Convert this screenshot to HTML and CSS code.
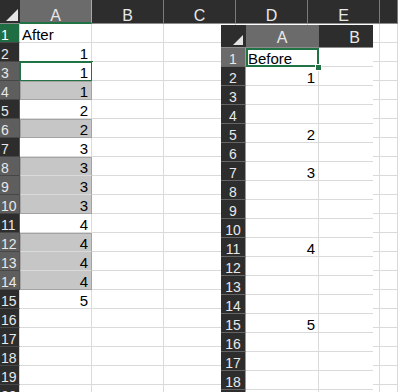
FILE: index.html
```html
<!DOCTYPE html>
<html lang="en">

<head>
  <meta charset="UTF-8">
  <title>After / Before</title>
  <link rel="stylesheet" href="styles.css">
</head>

<body>

  <div class="screen">
    <div id="main-sheet" class="sheet main"></div>
    <div id="float-sheet" class="sheet float">
      <div class="fill-handle"></div>
    </div>
  </div>

  <script>
    function addCell(sheet, cls, text) {
      var d = document.createElement('div');
      d.className = cls;
      if (text) {
        d.textContent = text;
      }
      sheet.appendChild(d);
      return d;
    }

    function buildSheet(sheet, cols, rowCount, data, rowClass, cellClass) {
      addCell(sheet, 'corner');
      cols.forEach(function (c, i) {
        addCell(sheet, 'col-h' + (i === 0 ? ' sel' : ''), c);
      });
      for (var r = 1; r <= rowCount; r++) {
        addCell(sheet, 'row-h ' + rowClass(r), String(r));
        cols.forEach(function (c, i) {
          var v = i === 0 ? data[r] : '';
          var cls = 'cell';
          if (v && !isNaN(v)) cls += ' num';
          if (i === 0) cls += ' ' + cellClass(r);
          addCell(sheet, cls, v);
        });
      }
    }

    // left sheet: the result
    var after = { 1: 'After', 2: '1', 3: '1', 4: '1', 5: '2', 6: '2', 7: '3', 8: '3', 9: '3', 10: '3', 11: '4', 12: '4', 13: '4', 14: '4', 15: '5' };
    var grey = [4, 6, 8, 9, 10, 12, 13, 14];
    var tops = [4, 6, 8, 12];
    var bots = [4, 6, 10, 14];

    buildSheet(document.getElementById('main-sheet'), ['A', 'B', 'C', 'D', 'E', ''], 20, after,
      function (r) {
        var cls = '';
        if (r === 1) cls += ' on';
        if (r === 3 || grey.indexOf(r) > -1) cls += ' sel';
        if (r >= 3 && r <= 14) cls += ' edge';
        return cls;
      },
      function (r) {
        if (r === 3) return 'active';
        var cls = '';
        if (grey.indexOf(r) > -1) cls += ' grey';
        if (tops.indexOf(r) > -1) cls += ' top';
        if (bots.indexOf(r) > -1) cls += ' bot';
        return cls;
      });

    // right sheet: the source
    var before = { 1: 'Before', 2: '1', 5: '2', 7: '3', 11: '4', 15: '5' };
    var floatSheet = document.getElementById('float-sheet');
    buildSheet(floatSheet, ['A', 'B'], 19, before,
      function (r) { return r === 1 ? 'sel' : ''; },
      function (r) { return r === 1 ? 'current' : ''; });
    floatSheet.appendChild(floatSheet.querySelector('.fill-handle'));
  </script>

</body>

</html>
```

FILE: styles.css
```css
body {
  margin: 0;
  background: #fff;
  font-family: "Liberation Sans", Arial, sans-serif;
}

.screen {
  position: relative;
  width: 398px;
  height: 392px;
  overflow: hidden;
}

.sheet {
  display: grid;
}

.main {
  grid-template-columns: 20px repeat(5, 72px) 18px;
  grid-template-rows: 24px repeat(20, 19px);
}

/* second window laid over the first one */
.float {
  position: absolute;
  left: 221px;
  top: 25px;
  width: 152px;
  height: 367px;
  overflow: hidden;
  grid-template-columns: 25px 73px 72px;
  grid-template-rows: 23px repeat(19, 19px);
}

.corner {
  box-sizing: border-box;
  background: #2d2d2d;
  display: flex;
  align-items: flex-end;
  justify-content: flex-end;
  padding: 0 2px 2px 0;
  border-bottom: 1px solid #8c8c8c;
}

.corner::after {
  content: "";
  border-left: 12px solid transparent;
  border-bottom: 12px solid #e4e4e4;
}

.float .corner {
  padding: 0 3px 2px 0;
}

.float .corner::after {
  border-left-width: 10px;
  border-bottom-width: 10px;
}

.col-h {
  box-sizing: border-box;
  background: #2d2d2d;
  color: #e8e8e8;
  font-size: 16px;
  line-height: 16px;
  padding-top: 8px;
  text-align: center;
  border-right: 1px solid #7a7a7a;
  border-bottom: 1px solid #8c8c8c;
}

.col-h.sel {
  background: #6b6b6b;
  border-right-color: #a8a8a8;
}

.main .col-h.sel {
  border-bottom: 2px solid #217346;
}

.float .col-h {
  padding-top: 5px;
  border-right-color: #2d2d2d;
}

.float .col-h.sel {
  border-right-color: #6b6b6b;
}

.row-h {
  box-sizing: border-box;
  background: #2d2d2d;
  color: #e8e8e8;
  font-size: 14px;
  line-height: 14px;
  padding: 4px 0 0 1px;
  border-bottom: 1px solid #474747;
  border-right: 1px solid #d4d4d4;
  white-space: nowrap;
}

.row-h.sel {
  background: #5e5e5e;
}

.row-h.on {
  background: #1f6e43;
  color: #fff;
}

.row-h.edge {
  border-right-color: #217346;
}

.float .row-h {
  text-align: center;
  padding-left: 0;
  border-bottom-color: #646464;
  border-right-color: #9a9a9a;
}

.float .row-h.sel {
  background: #6b6b6b;
}

.cell {
  box-sizing: border-box;
  background: #fff;
  color: #000;
  font-size: 15px;
  line-height: 16px;
  padding: 3px 3px 0 2px;
  white-space: nowrap;
  overflow: hidden;
  border-right: 1px solid #dadada;
  border-bottom: 1px solid #dadada;
}

.cell.num {
  text-align: right;
}

.cell.grey {
  background: #c6c6c6;
  border-left: 1px solid #a3a3a3;
  border-right-color: #a3a3a3;
}

.cell.grey.top {
  border-top: 1px solid #a3a3a3;
  padding-top: 2px;
}

.cell.grey.bot {
  border-bottom-color: #a3a3a3;
}

.cell.active {
  outline: 2px solid #217346;
  outline-offset: -1px;
}

.cell.current {
  outline: 2px solid #217346;
  outline-offset: -2px;
}

.fill-handle {
  position: absolute;
  left: 94px;
  top: 39px;
  width: 5px;
  height: 5px;
  background: #217346;
  border: 1px solid #fff;
}
```
